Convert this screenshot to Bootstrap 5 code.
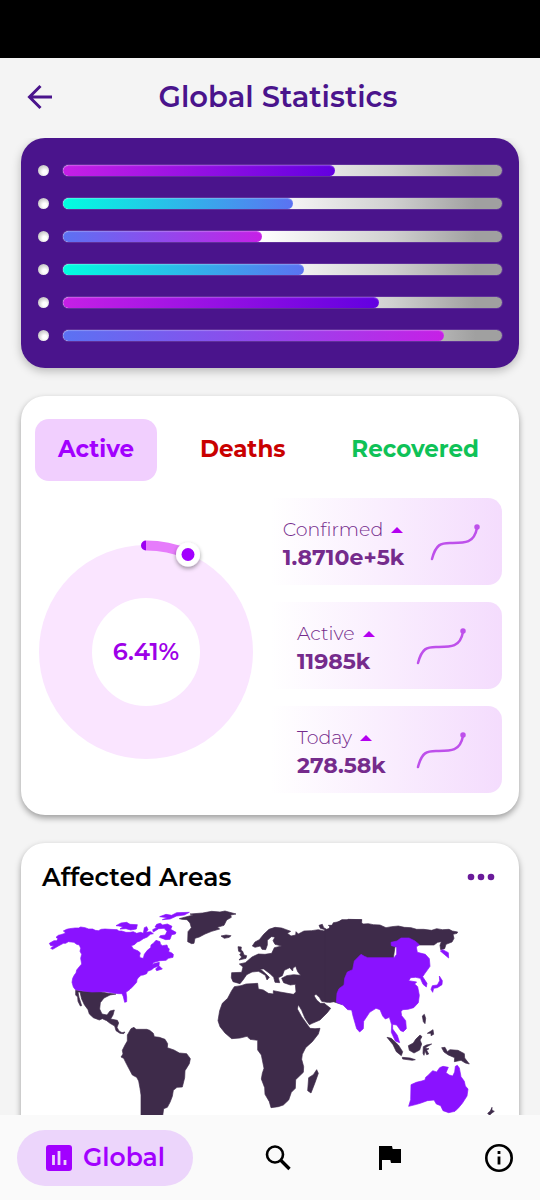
<!DOCTYPE html>
<html lang="en">
<head>
<meta charset="utf-8">
<meta name="viewport" content="width=device-width, initial-scale=1">
<title>Global Statistics</title>
<link href="https://cdn.jsdelivr.net/npm/bootstrap@5.3.0/dist/css/bootstrap.min.css" rel="stylesheet">
<style>
  body { font-family: Montserrat, Inter, "Open Sans", sans-serif; background: #f4f4f4; color: #000; }
  .status-strip { height: 58px; background: #000; }
  .top-bar { height: 80px; padding: 0 24px 2px; color: #4a148c; }
  .top-bar h1 { font-size: 29px; font-weight: 600; line-height: 36px; }
  .icon-btn { width: 32px; height: 32px; padding: 0; border: 0; background: none; color: inherit; display: flex; align-items: center; justify-content: center; }
  .scroll-area { min-height: 0; overflow-y: auto; scrollbar-width: none; }
  .scroll-area::-webkit-scrollbar { display: none; }
  .stack { padding: 0 21px 28px; gap: 28px; }
  .panel { border-radius: 24px; background: #fff; box-shadow: 0 3px 6px rgba(0,0,0,.36); }
  .bars-panel { background: #4a148c; padding: 16px 17px; box-shadow: 0 3px 10px rgba(0,0,0,.25); }
  .bar-row { height: 33px; gap: 14px; }
  .bullet { width: 11px; height: 11px; border-radius: 50%; background: radial-gradient(circle at 60% 65%, #fff 20%, #a8a8a8 100%); }
  .meter { height: 11px; border-radius: 6px; background: linear-gradient(90deg, #fff 45%, #d0d0d0 75%, #a0a0a0 94%); box-shadow: 0 0 0 1px rgba(255,255,255,.12); }
  .meter .progress-bar { border-radius: 6px; box-shadow: inset 0 1px 1px rgba(255,255,255,.25); }
  .fill-violet { background: linear-gradient(90deg, #c620e6, #6200e0); }
  .fill-aqua { background: linear-gradient(90deg, #00ffe0, #5b72f2); }
  .fill-rose { background: linear-gradient(90deg, #5b72f2, #c620e6); }
  .stats-panel { padding: 23px 17px 22px 14px; }
  .tab-btn { height: 62px; padding: 0 23px 2px; border: 0; border-radius: 14px; background: none; font-size: 23px; font-weight: 700; line-height: 28px; }
  .tab-btn.active { background: #f1cffe; color: #a200ff; }
  .tab-deaths { color: #c90000; }
  .tab-recovered { color: #0fc257; }
  .stats-body { padding-top: 17px; }
  .ring { width: 222px; overflow: visible; }
  .ring text { font-size: 24px; font-weight: 600; }
  .tiles { width: 241px; gap: 17px; }
  .tile { height: 87px; gap: 26px; border-radius: 14px; background: linear-gradient(90deg, #fff 4%, #f4dcfd); color: #752b8c; }
  .tile-text { min-width: 93px; padding-top: 4px; }
  .tile-name { font-size: 19px; font-weight: 300; line-height: 28px; }
  .tile-value { font-size: 22px; font-weight: 700; line-height: 28px; }
  .map-head { padding: 18px 22px 0 21px; }
  .map-head h2 { font-size: 25px; font-weight: 600; line-height: 32px; }
  .map-box { padding: 2px 4px 0 9px; }
  .bottom-nav { height: 85px; background: #fafafa; padding: 0 25px 0 17px; }
  .nav-pill { height: 56px; padding: 0 28px; border: 0; border-radius: 28px; gap: 10px; background: #ecd5fb; color: #a200ff; font-size: 25px; font-weight: 600; }
  .nav-rest { padding-left: 69px; }
</style>
</head>
<body>
<div class="vh-100 d-flex flex-column">
  <div class="status-strip flex-shrink-0"></div>
  <header class="top-bar d-flex align-items-center flex-shrink-0">
    <button class="icon-btn" type="button" aria-label="Back">
      <svg width="26" height="26" viewBox="0 0 26 26" fill="none" stroke="currentColor" stroke-width="3"><path d="M25 13H3M13.500 2L2.500 13l11 11"/></svg>
    </button>
    <h1 class="flex-grow-1 text-center mb-0 me-3">Global Statistics</h1>
  </header>

  <main class="scroll-area flex-grow-1">
    <div class="stack d-flex flex-column">
      <section class="panel bars-panel" aria-label="Progress overview">
        <div class="bar-row d-flex align-items-center"><span class="bullet"></span><div class="progress meter flex-grow-1"><div class="progress-bar fill-violet" style="width:62%"></div></div></div>
        <div class="bar-row d-flex align-items-center"><span class="bullet"></span><div class="progress meter flex-grow-1"><div class="progress-bar fill-aqua" style="width:52.5%"></div></div></div>
        <div class="bar-row d-flex align-items-center"><span class="bullet"></span><div class="progress meter flex-grow-1"><div class="progress-bar fill-rose" style="width:45.3%"></div></div></div>
        <div class="bar-row d-flex align-items-center"><span class="bullet"></span><div class="progress meter flex-grow-1"><div class="progress-bar fill-aqua" style="width:55%"></div></div></div>
        <div class="bar-row d-flex align-items-center"><span class="bullet"></span><div class="progress meter flex-grow-1"><div class="progress-bar fill-violet" style="width:72%"></div></div></div>
        <div class="bar-row d-flex align-items-center"><span class="bullet"></span><div class="progress meter flex-grow-1"><div class="progress-bar fill-rose" style="width:86.8%"></div></div></div>
      </section>

      <section class="panel stats-panel">
        <div class="d-flex justify-content-between">
          <button class="tab-btn active" type="button">Active</button>
          <button class="tab-btn tab-deaths" type="button">Deaths</button>
          <button class="tab-btn tab-recovered" type="button">Recovered</button>
        </div>
        <div class="stats-body d-flex justify-content-between align-items-center">
          <svg class="ring" viewBox="0 0 222 222" role="img" aria-label="6.41 percent active">
            <defs><filter id="knob" x="-50%" y="-50%" width="200%" height="200%"><feDropShadow dx="0" dy="2" stdDeviation="2" flood-opacity=".4"/></filter></defs>
            <circle cx="111" cy="117" r="80.5" fill="none" stroke="#fae5ff" stroke-width="53"/>
            <path d="M111 10.500A106.500 106.500 0 0 1 153 19" fill="none" stroke="#e67cfb" stroke-width="10"/>
            <path d="M111 5.500a5 5 0 0 0 0 10z" fill="#9d00f2"/>
            <circle cx="153" cy="19.500" r="12" fill="#fff" filter="url(#knob)"/>
            <circle cx="153" cy="19.500" r="6.500" fill="#a200ff"/>
            <text x="111" y="125" text-anchor="middle" fill="#9d00e8">6.41%</text>
          </svg>
          <div class="tiles d-flex flex-column">
            <div class="tile d-flex align-items-center justify-content-center">
              <div class="tile-text"><div class="tile-name d-flex align-items-center gap-2">Confirmed <svg width="12" height="6" viewBox="0 0 12 6" fill="#b400f0"><path d="M0 6L6 0l6 6z"/></svg></div><div class="tile-value">1.8710e+5k</div></div>
              <svg width="50" height="38" viewBox="0 0 50 38" fill="none" stroke="#be50eb" stroke-width="2.500" stroke-linecap="round"><path d="M2 36C6 21 11 20 20 20C34 20 44 21 47 5"/><circle cx="47" cy="4" r="1.500" fill="#be50eb"/></svg>
            </div>
            <div class="tile d-flex align-items-center justify-content-center">
              <div class="tile-text"><div class="tile-name d-flex align-items-center gap-2">Active <svg width="12" height="6" viewBox="0 0 12 6" fill="#b400f0"><path d="M0 6L6 0l6 6z"/></svg></div><div class="tile-value">11985k</div></div>
              <svg width="50" height="38" viewBox="0 0 50 38" fill="none" stroke="#be50eb" stroke-width="2.500" stroke-linecap="round"><path d="M2 36C6 21 11 20 20 20C34 20 44 21 47 5"/><circle cx="47" cy="4" r="1.500" fill="#be50eb"/></svg>
            </div>
            <div class="tile d-flex align-items-center justify-content-center">
              <div class="tile-text"><div class="tile-name d-flex align-items-center gap-2">Today <svg width="12" height="6" viewBox="0 0 12 6" fill="#b400f0"><path d="M0 6L6 0l6 6z"/></svg></div><div class="tile-value">278.58k</div></div>
              <svg width="50" height="38" viewBox="0 0 50 38" fill="none" stroke="#be50eb" stroke-width="2.500" stroke-linecap="round"><path d="M2 36C6 21 11 20 20 20C34 20 44 21 47 5"/><circle cx="47" cy="4" r="1.500" fill="#be50eb"/></svg>
            </div>
          </div>
        </div>
      </section>

      <section class="panel">
        <div class="map-head d-flex align-items-center justify-content-between">
          <h2 class="mb-0">Affected Areas</h2>
          <button class="icon-btn" type="button" aria-label="More options"><svg width="28" height="8" viewBox="0 0 28 8" fill="#6a1b9a"><circle cx="4" cy="4" r="3.300"/><circle cx="14" cy="4" r="3.300"/><circle cx="24" cy="4" r="3.300"/></svg></button>
        </div>
        <div class="map-box">
          <svg class="d-block w-100" viewBox="0 0 1455 930" role="img" aria-label="World map of affected areas" stroke-linejoin="round" stroke-width="2">
            <!-- the Americas -->
            <g fill="#3e2b4a" stroke="#3e2b4a">
              <path d="M137 286L160 289L210 290L235 295L258 297L240 300L222 309L211 323L209 342L216 357L231 360L240 348L253 345L249 360L242 372L262 376L266 384L261 397L267 408L276 413L285 411L281 416L270 415L258 407L254 393L240 385L230 377L217 371L208 375L190 368L178 357L174 344L163 329L155 312L150 291L144 291L147 307L155 332L151 333L144 319L143 306L137 300Z"/>
              <path d="M303 401L312 397L318 403L350 403L359 406L370 415L373 425L388 427L405 433L413 446L412 458L432 465L448 474L470 476L481 491L478 506L465 527L464 548L457 576L441 577L430 586L427 604L420 622L412 637L401 641L398 663L380 700L366 735L364 775L350 780L337 740L333 680L333 600L330 580L326 558L320 547L307 540L290 508L281 490L273 486L279 477L277 466L285 450L292 438L292 420Z"/>
            </g>
            <g fill="#8a12ff" stroke="#8a12ff">
              <path d="M58 145L65 141L72 137L80 137L84 131L78 127L85 121L92 119L106 115L104 110L100 108L110 103L118 101L135 99L146 99L152 96L165 98L176 102L188 102L196 106L205 107L214 103L225 102L240 103L262 104L266 108L275 108L288 112L300 112L310 110L320 115L332 112L340 115L343 98L350 95L354 104L348 112L362 110L370 116L361 118L352 126L340 131L330 138L322 141L313 149L304 152L310 162L325 168L331 174L329 182L330 188L340 190L343 178L352 166L362 158L363 150L370 145L378 136L390 140L391 147L397 152L411 150L413 157L418 162L416 170L424 173L430 178L429 187L415 190L408 196L390 197L372 202L366 209L375 205L388 202L387 212L397 222L380 227L377 222L386 213L372 218L365 224L353 229L350 236L340 240L333 241L325 248L321 254L320 262L308 275L300 283L288 292L290 306L290 320L284 322L280 305L276 296L265 296L250 294L225 290L185 291L160 288L136 284L130 276L126 262L128 250L133 240L138 234L140 225L148 215L155 207L152 190L155 178L150 169L152 160L148 150L140 148L132 142L115 140L107 145L100 145L85 153L68 163L62 160L72 152L62 152Z"/>
              <path d="M258 92L273 84L290 82L300 88L322 89L319 102L302 105L288 101L270 102L279 95L266 93Z"/>
              <path d="M375 96L380 88L391 85L398 90L412 87L426 94L422 103L438 112L436 117L425 119L420 133L407 134L388 127L391 122L406 120L411 109L402 100L386 101L370 111L368 104L382 97Z"/>
              <path d="M389 65L408 58L425 61L440 53L478 52L463 60L440 63L420 72L397 74L412 68Z"/>
            </g>
            <g fill="#3e2b4a" stroke="#3e2b4a">
              <path d="M448 71L478 63L490 60L480 57L518 54L545 49L570 51L585 48L618 57L602 60L604 67L590 75L582 91L562 97L569 102L545 109L525 117L508 126L495 130L492 145L485 146L473 140L474 110L484 98L480 84L471 74L455 73Z"/>
            </g>
            <!-- Europe, Africa and the Middle East -->
            <g transform="translate(405 0)" fill="#3e2b4a" stroke="#3e2b4a">
              <path d="M168 123L183 120L198 122L193 127L178 130Z"/>
              <path d="M219 155L229 156L228 165L233 169L237 180L245 182L243 190L222 195L230 186L224 179L229 173L221 169Z"/>
              <path d="M262 153L270 141L283 134L296 118L312 103L330 97L350 99L364 104L377 109L367 115L378 123L392 120L393 110L400 117L417 108L440 107L460 104L478 108L480 104L466 100L462 91L472 88L476 98L485 103L498 98L490 91L501 91L505 83L525 80L530 74L560 74L590 74L590 290L530 328L505 320L486 322L470 319L463 307L453 298L447 302L455 315L466 325L478 325L485 331L497 340L487 353L465 375L442 385L433 389L420 370L410 346L400 329L397 342L410 365L425 386L435 400L450 401L465 400L460 417L442 440L422 458L412 478L410 493L416 515L415 532L392 554L391 580L379 592L371 615L355 630L340 635L318 638L313 620L300 598L299 578L289 552L292 535L297 520L289 480L278 465V436L255 433L246 424L225 429L200 431L180 414L165 395L159 377L164 347L172 325L188 310L200 287L208 275L228 272L243 267L278 265L280 282L295 285L310 295L325 297L325 287L345 291L385 298L393 291L391 268L376 270L356 263L350 250L365 242L386 239L407 241L398 230L392 214L384 219L383 228L374 218L358 226L352 242L340 248L344 263L330 262L326 247L315 236L296 222L286 222L302 236L313 247L306 255L301 241L286 232L280 229L261 231L245 239L234 255L225 266L204 260L199 248L200 233L230 232L234 216L223 207L241 203L261 186L280 177L300 178L320 175L328 158L350 153L330 148L324 137L330 126L319 125L307 136L307 150L302 164L291 163L286 153L270 157Z"/>
              <path d="M455 524L460 535L450 563L438 594L428 587L431 548L445 539Z"/>
            </g>
            <!-- Asia and Oceania -->
            <g transform="translate(885 0)">
              <g fill="#3e2b4a" stroke="#3e2b4a">
                <path d="M0 106L12 108L14 95L24 90L33 84L48 76L66 76L70 73L110 74L105 83L116 87L130 86L145 89L165 90L183 98L200 95L220 93L238 97L258 98L275 103L296 103L320 106L335 101L352 104L372 103L382 108L398 111L396 115L384 118L387 130L381 141L363 148L359 161L347 164L345 151L349 140L338 142L327 150L280 150L210 155L205 190L100 190L66 235L34 318L15 322L0 318Z"/>
                <path d="M186 427L199 430L220 450L233 470L229 482L214 470L204 449ZM232 487L255 489L271 494L262 496L233 492Z"/>
                <path d="M250 452L265 444L272 433L285 420L291 425L285 435L290 447L284 465L267 474L253 466Z"/>
                <path d="M295 455L304 450L320 447L306 455L300 460L312 461L305 466L311 477L305 479L300 467L297 481L294 475ZM292 363L298 358L302 370L300 386L295 380ZM307 415L324 404L326 418L318 422L318 415Z"/>
                <path d="M350 458L360 457L367 470L375 464L399 466L418 476L419 489L433 507L421 504L408 496L388 500L389 488L370 480L357 471Z"/>
                <path d="M488 655L496 648L501 637L501 646L508 649L498 656L494 661Z"/>
              </g>
              <g fill="#8a12ff" stroke="#8a12ff">
                <path d="M34 322L36 295L42 281L57 270L59 250L67 231L83 224L88 198L108 178L118 184L128 188H207L215 178V156L199 152L198 142L216 138L228 129L252 129L270 138L283 149L274 156L277 172L301 178L313 191L315 214L300 235L293 245L306 265L304 276L294 268L286 250L272 247L257 248L251 257L275 261L269 267L278 275L283 301L280 323L266 338L249 343L233 344L228 350L230 362L242 377L244 401L235 410L227 407L215 390L203 388L203 402L217 421L224 443L211 438L199 412L200 389L193 367L181 372L173 363L165 344L153 340L134 352L116 379L115 401L104 411L95 401L84 363L80 345L68 344L54 330Z"/>
                <path d="M353 164L370 173L371 189L359 179L346 168ZM343 243L352 257L351 269L337 278L326 280L323 292L318 283L322 272L337 270L344 257Z"/>
                <path d="M258 569L274 562L290 558L300 555L302 547L308 542L323 527L335 531L344 518L354 514L370 517L363 533L373 540L383 543L389 531L391 514L397 511L403 519L408 545L418 559L421 573L429 582L426 603L412 625L401 638L390 649L371 653L354 647L347 632L334 627L327 615L307 617L288 624L275 628L251 634L257 614Z"/>
              </g>
            </g>
          </svg>
        </div>
      </section>
    </div>
  </main>

  <nav class="bottom-nav d-flex align-items-center flex-shrink-0" aria-label="Main">
    <button class="nav-pill d-flex align-items-center" type="button">
      <svg width="28" height="28" viewBox="0 0 28 28"><rect x="1" y="1" width="26" height="26" rx="3" fill="currentColor"/><path d="M8.500 11v10M14 7v14M20 16v5" stroke="#ecd5fb" stroke-width="2.800"/></svg>
      Global
    </button>
    <div class="nav-rest flex-grow-1 d-flex justify-content-between">
      <button class="icon-btn" type="button" aria-label="Search"><svg width="28" height="28" viewBox="0 0 28 28" fill="none" stroke="currentColor"><circle cx="11" cy="10.500" r="8" stroke-width="2.600"/><path d="M16.500 16L25.500 25" stroke-width="3.400"/></svg></button>
      <button class="icon-btn" type="button" aria-label="Report"><svg width="28" height="28" viewBox="0 0 28 28" fill="currentColor"><path d="M4 2h13l.7 3H26v14h-10l-.7-3H7v10H4z"/></svg></button>
      <button class="icon-btn" type="button" aria-label="Information"><svg width="30" height="30" viewBox="0 0 30 30" fill="none" stroke="currentColor"><circle cx="15" cy="15" r="12.700" stroke-width="2.600"/><path d="M15 13.500v8M15 8v3" stroke-width="2.800"/></svg></button>
    </div>
  </nav>
</div>
<script src="https://cdn.jsdelivr.net/npm/bootstrap@5.3.0/dist/js/bootstrap.bundle.min.js"></script>
</body>
</html>
